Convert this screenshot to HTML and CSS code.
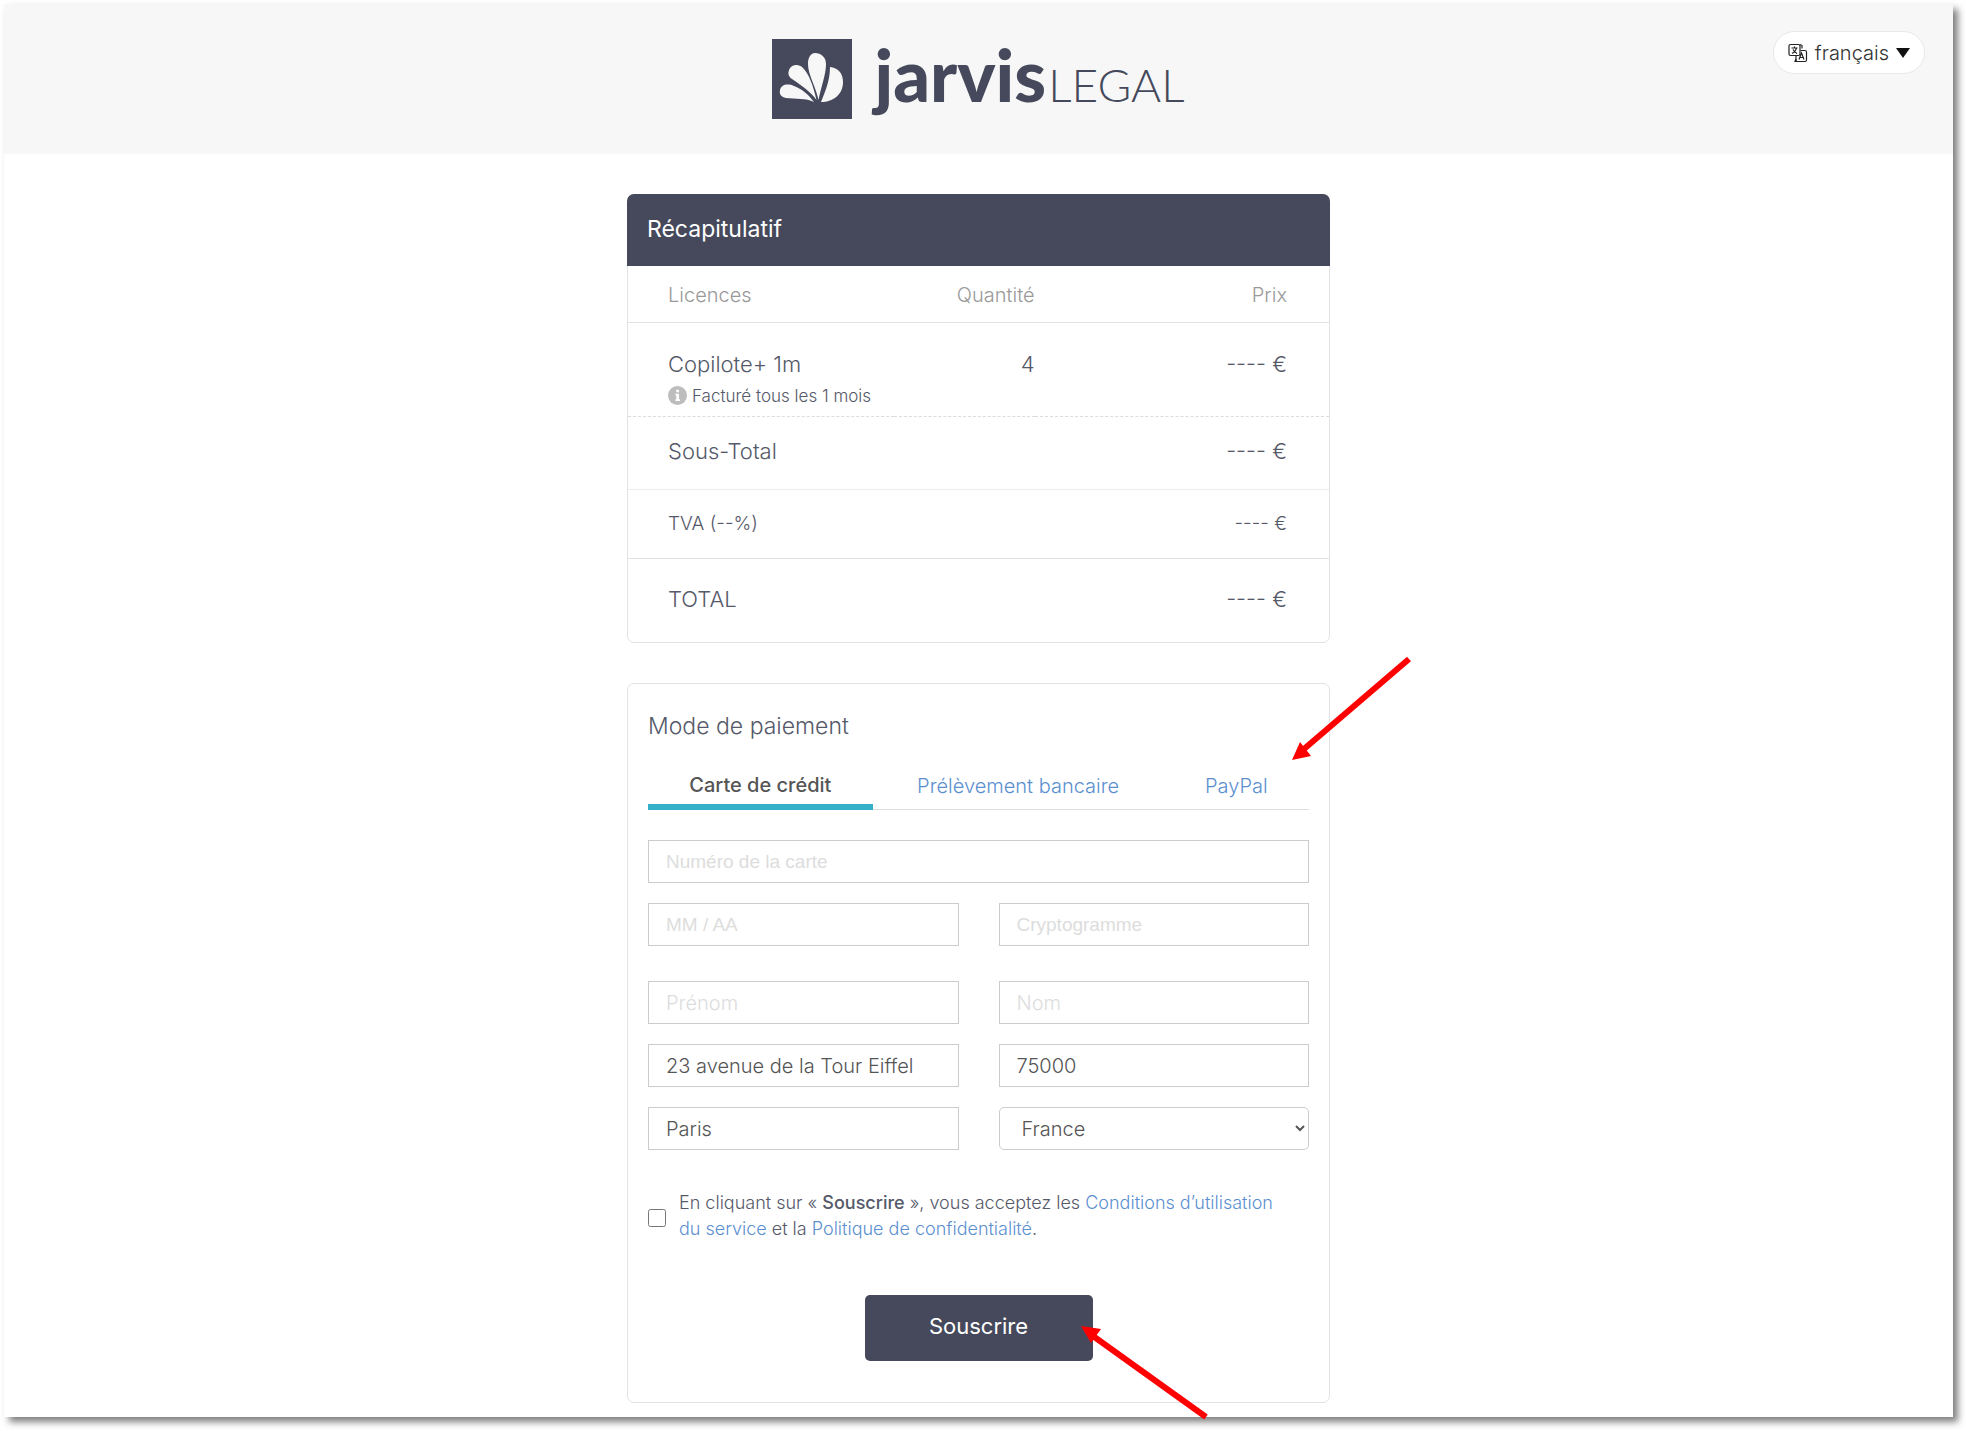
FILE: index.html
```html
<!DOCTYPE html>
<html lang="fr">
<head>
    <meta charset="UTF-8">
    <meta name="viewport" content="width=device-width, initial-scale=1.0">
    <title>Jarvis Legal - Souscription</title>
    <link rel="stylesheet" href="styles.css">
</head>
<body>
    <div class="page">
        <header class="header">
            <a href="#" class="logo">
                <svg class="logo-mark" viewBox="0 0 80 80" aria-hidden="true">
                    <rect width="80" height="80" fill="#45495b"/>
                    <g fill="#f7f7f7">
                        <path d="M43 14C49 14 54 18 54 25C54 36 49 48 46.500 61C44 48 36 36 36 25C36 18 39 14 43 14Z"/>
                        <path d="M58 28C66 29 71 34 71 43C71 55 62 63 49 63C53 53 58 42 58 28Z"/>
                        <path d="M17 31C19 26 26 24 31 29C37 35 41 46 44.500 61C39 53 29 46 20 40C16 37 16 34 17 31Z"/>
                        <path d="M8 51C9 46 15 44 22 47C30 50 36 55 42 63C34 59 24 60 14 59C9 58 7 55 8 51Z"/>
                    </g>
                </svg>
                <span class="logo-text"><span class="logo-bold">jarvis</span><span class="logo-thin">LEGAL</span></span>
            </a>
            <button type="button" class="lang-button">
                <svg class="lang-icon" viewBox="0 0 20 20" fill="none" stroke="#222" stroke-width="1.200" aria-hidden="true">
                    <rect x="1" y="1.500" width="11" height="11" rx="1.500"/>
                    <path d="M12.500 7.500H17a1.500 1.500 0 0 1 1.500 1.500v8a1.500 1.500 0 0 1-1.500 1.500H9.500A1.500 1.500 0 0 1 8 17v-4.500"/>
                    <path d="M3.500 5h6M6.500 3.500V5M8.500 5C8 7.500 6 9.500 4 10.500M5 6.500c.8 1.800 2 3 4 4"/>
                    <path d="M11 16.500l2.500-6.500 2.500 6.500M11.800 14.500h3.400M12 1.500l2 1v3M8 16l-1 2.500h2"/>
                </svg>
                <span>français</span>
                <span class="lang-arrow"></span>
            </button>
        </header>

        <main class="content">
            <section class="card">
                <h2 class="card-header">Récapitulatif</h2>
                <table class="summary">
                    <thead>
                        <tr>
                            <th class="col-name">Licences</th>
                            <th class="col-quantity">Quantité</th>
                            <th class="col-price">Prix</th>
                        </tr>
                    </thead>
                    <tbody>
                        <tr class="row-licence">
                            <td class="col-name">
                                Copilote+ 1m
                                <div class="note">
                                    <svg class="note-icon" viewBox="0 0 18 18" aria-hidden="true">
                                        <circle cx="9" cy="9" r="9" fill="#bdbdbd"/>
                                        <path d="M7.800 3.500h2.600v2.400H7.800zM7 7.300h3.400v5.200h1v1.600H7v-1.600h.9V8.900H7z" fill="#fff"/>
                                    </svg>
                                    Facturé tous les 1 mois
                                </div>
                            </td>
                            <td class="col-quantity">4</td>
                            <td class="col-price">---- €</td>
                        </tr>
                        <tr class="row-subtotal">
                            <td class="col-name" colspan="2">Sous-Total</td>
                            <td class="col-price">---- €</td>
                        </tr>
                        <tr class="row-tax">
                            <td class="col-name" colspan="2">TVA (--%)</td>
                            <td class="col-price">---- €</td>
                        </tr>
                        <tr class="row-total">
                            <td class="col-name" colspan="2">TOTAL</td>
                            <td class="col-price">---- €</td>
                        </tr>
                    </tbody>
                </table>
            </section>

            <section class="card payment">
                <h2 class="payment-title">Mode de paiement</h2>
                <nav class="tabs">
                    <a href="#carte" class="tab active">Carte de crédit</a>
                    <a href="#prelevement" class="tab">Prélèvement bancaire</a>
                    <a href="#paypal" class="tab">PayPal</a>
                </nav>

                <form class="payment-form">
                    <div class="fields card-fields">
                        <input type="text" class="input-field wide" placeholder="Numéro de la carte" aria-label="Numéro de la carte">
                        <input type="text" class="input-field" placeholder="MM / AA" aria-label="Date d'expiration">
                        <input type="text" class="input-field" placeholder="Cryptogramme" aria-label="Cryptogramme">
                    </div>
                    <div class="fields">
                        <input type="text" class="input-field" placeholder="Prénom" aria-label="Prénom">
                        <input type="text" class="input-field" placeholder="Nom" aria-label="Nom">
                        <input type="text" class="input-field" value="23 avenue de la Tour Eiffel" aria-label="Adresse">
                        <input type="text" class="input-field" value="75000" aria-label="Code postal">
                        <input type="text" class="input-field" value="Paris" aria-label="Ville">
                        <select class="input-field country" aria-label="Pays">
                            <option>France</option>
                        </select>
                    </div>

                    <div class="terms">
                        <input type="checkbox" id="terms" class="terms-box">
                        <label for="terms" class="terms-text">En cliquant sur « <strong>Souscrire</strong> », vous acceptez les <a href="#">Conditions d’utilisation du service</a> et la <a href="#">Politique de confidentialité</a>.</label>
                    </div>

                    <div class="submit-holder">
                        <button type="submit" class="submit-button">Souscrire</button>
                    </div>
                </form>

                <svg class="arrow arrow-paypal" viewBox="0 0 120 106" aria-hidden="true">
                    <path d="M117 3L12 93" stroke="#f00" stroke-width="6"/>
                    <path d="M0 104L8 86L19 100Z" fill="#f00"/>
                </svg>
                <svg class="arrow arrow-submit" viewBox="0 0 130 96" aria-hidden="true">
                    <path d="M125 91L12 10" stroke="#f00" stroke-width="6"/>
                    <path d="M0 0L20 3L10 17Z" fill="#f00"/>
                </svg>
            </section>
        </main>
    </div>
</body>
</html>
```
FILE: styles.css
```css
* {
    margin: 0;
    padding: 0;
    box-sizing: border-box;
}

body {
    font-family: Inter, "Open Sans", sans-serif;
    font-weight: 300;
    font-size: 20px;
    color: #555969;
    background-color: white;
}

a {
    color: #5b8fd0;
    text-decoration: none;
}

.page {
    margin: 4px 13px 13px 4px;
    padding-bottom: 14px;
    background-color: white;
    box-shadow: 5px 5px 7px rgba(0, 0, 0, 0.5);
}

.header {
    display: grid;
    grid-template-columns: 1fr auto 1fr;
    align-items: start;
    height: 150px;
    padding: 27px 28px 0;
    background-color: #f7f7f7;
}

.logo {
    grid-column: 2;
    display: flex;
    align-items: flex-start;
    gap: 22px;
    height: 80px;
    margin-top: 8px;
    color: #45495b;
}

.logo-mark {
    width: 80px;
    height: 80px;
}

.logo-text {
    display: flex;
    align-items: baseline;
    gap: 2px;
    font-family: Lato, sans-serif;
    line-height: 70px;
    white-space: nowrap;
}

.logo-bold {
    font-size: 72px;
    font-weight: 900;
}

.logo-thin {
    font-size: 46px;
    font-weight: 300;
}

.lang-button {
    justify-self: end;
    display: flex;
    align-items: center;
    gap: 7px;
    height: 43px;
    padding: 0 14px;
    font-family: inherit;
    font-size: 20px;
    font-weight: 300;
    color: #333;
    background-color: white;
    border: 1px solid #e8e8e8;
    border-radius: 22px;
    cursor: pointer;
}

.lang-icon {
    width: 20px;
    height: 20px;
}

.lang-arrow {
    border-left: 7px solid transparent;
    border-right: 7px solid transparent;
    border-top: 10px solid #111;
}

.content {
    display: flex;
    flex-direction: column;
    gap: 40px;
    width: 100%;
    max-width: 703px;
    margin: 0 auto;
    padding-top: 40px;
}

.card {
    border: 1px solid #e3e3e3;
    border-radius: 7px;
}

.card-header {
    height: 72px;
    margin: -1px -1px 0;
    padding: 0 20px;
    line-height: 70px;
    font-size: 23px;
    font-weight: 400;
    color: white;
    background-color: #45495b;
    border-radius: 7px 7px 0 0;
}

.summary {
    width: 100%;
    table-layout: fixed;
    border-collapse: collapse;
    font-size: 22px;
}

.summary th {
    height: 56px;
    padding-top: 2px;
    font-size: 20px;
    font-weight: 300;
    color: #999;
    border-bottom: 1px solid #e3e3e3;
}

.col-name {
    width: 38%;
    padding-left: 40px;
    text-align: left;
}

.col-quantity {
    width: 20%;
    text-align: right;
}

.col-price {
    width: 42%;
    padding-right: 42px;
    text-align: right;
}

.row-licence td {
    height: 94px;
    padding-top: 25px;
    line-height: 32px;
    vertical-align: top;
    border-bottom: 1px dashed #dcdcdc;
}

.note {
    display: flex;
    align-items: center;
    gap: 5px;
    font-size: 17px;
    white-space: nowrap;
}

.note-icon {
    width: 19px;
    height: 19px;
}

.row-subtotal td {
    height: 73px;
    padding-bottom: 4px;
    border-bottom: 1px solid #ececec;
}

.row-tax td {
    height: 69px;
    font-size: 19px;
    border-bottom: 1px solid #e3e3e3;
}

.row-total td {
    height: 84px;
    padding-bottom: 2px;
}

.payment {
    position: relative;
    padding: 26px 20px 41px;
}

.payment-title {
    line-height: 32px;
    font-size: 23px;
    font-weight: 300;
}

.tabs {
    display: flex;
    margin-top: 22px;
    border-bottom: 1px solid #ddd;
}

.tab {
    flex: 22;
    height: 45px;
    line-height: 44px;
    text-align: center;
    white-space: nowrap;
    font-size: 20px;
}

.tab:nth-child(1) {
    flex: 34;
}

.tab:nth-child(2) {
    flex: 44;
}

.tab.active {
    height: 46px;
    line-height: 42px;
    margin-bottom: -1px;
    font-weight: 500;
    color: #555;
    border-bottom: 6px solid #35b0c8;
}

.payment-form {
    margin-top: 30px;
}

.fields {
    display: grid;
    grid-template-columns: 1fr 1fr;
    gap: 20px 40px;
}

.input-field {
    width: 100%;
    height: 43px;
    padding: 0 17px;
    font-family: inherit;
    font-size: 20px;
    font-weight: 300;
    color: #555;
    background-color: white;
    border: 1px solid #ccc;
    outline: none;
}

.input-field::placeholder {
    color: #ddd;
}

.card-fields {
    margin-bottom: 35px;
}

.card-fields .input-field {
    font-family: "Liberation Sans", Arial, sans-serif;
    font-size: 19px;
    font-weight: 400;
}

.wide {
    grid-column: 1 / 3;
}

.country {
    padding: 0 2px 0 18px;
    border-radius: 5px;
}

.terms {
    display: flex;
    align-items: center;
    gap: 13px;
    margin-top: 40px;
    font-size: 18px;
    line-height: 26px;
}

.terms-text {
    padding-right: 16px;
}

.terms strong {
    font-weight: 500;
}

.terms-box {
    flex: none;
    width: 18px;
    height: 18px;
    margin-top: 4px;
}

.submit-holder {
    margin-top: 53px;
    text-align: center;
}

.submit-button {
    width: 228px;
    height: 66px;
    padding-bottom: 4px;
    font-family: inherit;
    font-size: 22px;
    font-weight: 400;
    color: white;
    background-color: #45495b;
    border: none;
    border-radius: 5px;
    cursor: pointer;
}

/* red pointers laid over the form */
.arrow {
    position: absolute;
    pointer-events: none;
}

.arrow-paypal {
    width: 120px;
    height: 106px;
    top: -28px;
    left: 664px;
}

.arrow-submit {
    width: 130px;
    height: 96px;
    bottom: -20px;
    left: 453px;
}
```
